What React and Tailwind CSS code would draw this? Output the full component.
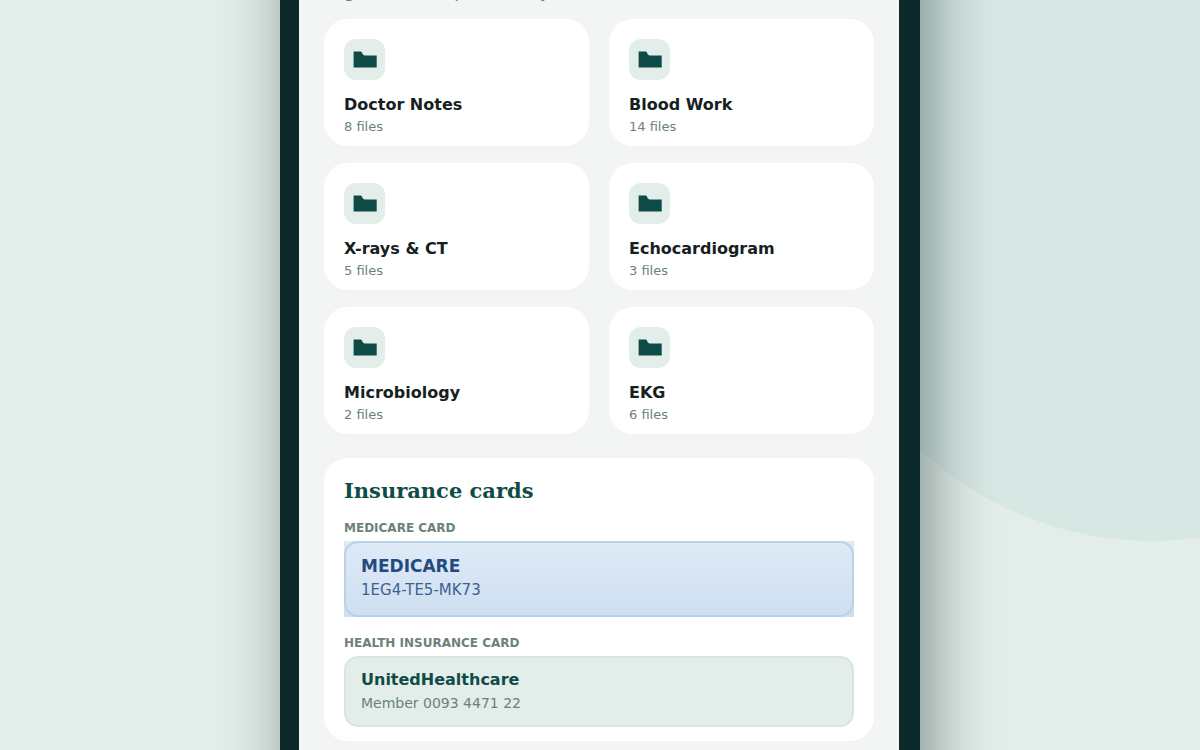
const SANS = "font-['DejaVu_Sans',sans-serif]";

const folders = [
  ["Doctor Notes", 8],
  ["Blood Work", 14],
  ["X-rays & CT", 5],
  ["Echocardiogram", 3],
  ["Microbiology", 2],
  ["EKG", 6],
];

function FolderIcon() {
  return (
    <span className="flex size-[41px] items-center justify-center rounded-xl bg-[#e3edea]">
      <svg viewBox="0 0 24 17" className="h-[17px] w-6" aria-hidden="true">
        <path d="M0.6 0.6H7.9Q9 1 9.3 2.6Q10 4.3 11.6 4.6H23.7V16.6H0.6Z" fill="#0f4c47" />
      </svg>
    </span>
  );
}

function Folder({ name, count }) {
  return (
    <a href="#folder" className="block rounded-3xl bg-white p-5 pb-[9px]">
      <FolderIcon />
      <h3 className="mt-[13px] text-base leading-6 font-bold text-[#16211f]">{name}</h3>
      <p className="text-[13px] leading-5 text-[#6b827b]">{count} files</p>
    </a>
  );
}

export default function App() {
  return (
    <div className={`relative flex h-screen justify-center overflow-hidden bg-[#e3ede9] ${SANS}`}>
      <div className="absolute -top-[139px] -right-[292px] size-[680px] rounded-full bg-[#d7e7e3]" />
      <main className="relative -mt-24 w-full max-w-[640px] self-start border-r-[21px] border-l-[19px] border-[#0d2a2a] bg-[#f3f5f4] px-[25px] pt-[77px] pb-24 shadow-[10px_0_60px_rgba(13,42,42,0.48)]">
        <p className="text-[17px] leading-5 text-[#6b827b]">Organized into portions by date</p>
        <section className="mt-[18px] grid grid-cols-2 gap-x-5 gap-y-[17px]">
          {folders.map(([name, count]) => (
            <Folder key={name} name={name} count={count} />
          ))}
        </section>
        <section className="mt-6 rounded-3xl bg-white px-5 pt-[17px] pb-[14px]">
          <h2 className="font-['DejaVu_Serif',serif] text-[21px] leading-8 font-bold text-[#0f4c47]">
            Insurance cards
          </h2>
          <h3 className="mt-[11px] text-xs leading-5 font-bold text-[#6b827b]">MEDICARE CARD</h3>
          <div className="mt-[3px] bg-linear-to-b from-[#dfeaf6] to-[#cddff1]">
            <div className="rounded-[14px] border-2 border-[#b9d2e8] px-[15px] pt-[11px] pb-[13px] text-[#244a80]">
              <p className="text-[17px] leading-6 font-bold">MEDICARE</p>
              <p className="text-[15px] leading-6 opacity-85">1EG4-TE5-MK73</p>
            </div>
          </div>
          <h3 className="mt-4 text-xs leading-5 font-bold text-[#6b827b]">HEALTH INSURANCE CARD</h3>
          <div className="mt-[3px] rounded-[14px] border-2 border-[#d9e5e1] bg-[#e3edea] px-[15px] pt-[10px] pb-[11px]">
            <p className="text-base leading-6 font-bold text-[#0f4c47]">UnitedHealthcare</p>
            <p className="text-sm leading-[22px] text-[#6b827b]">Member 0093 4471 22</p>
          </div>
        </section>
      </main>
    </div>
  );
}
